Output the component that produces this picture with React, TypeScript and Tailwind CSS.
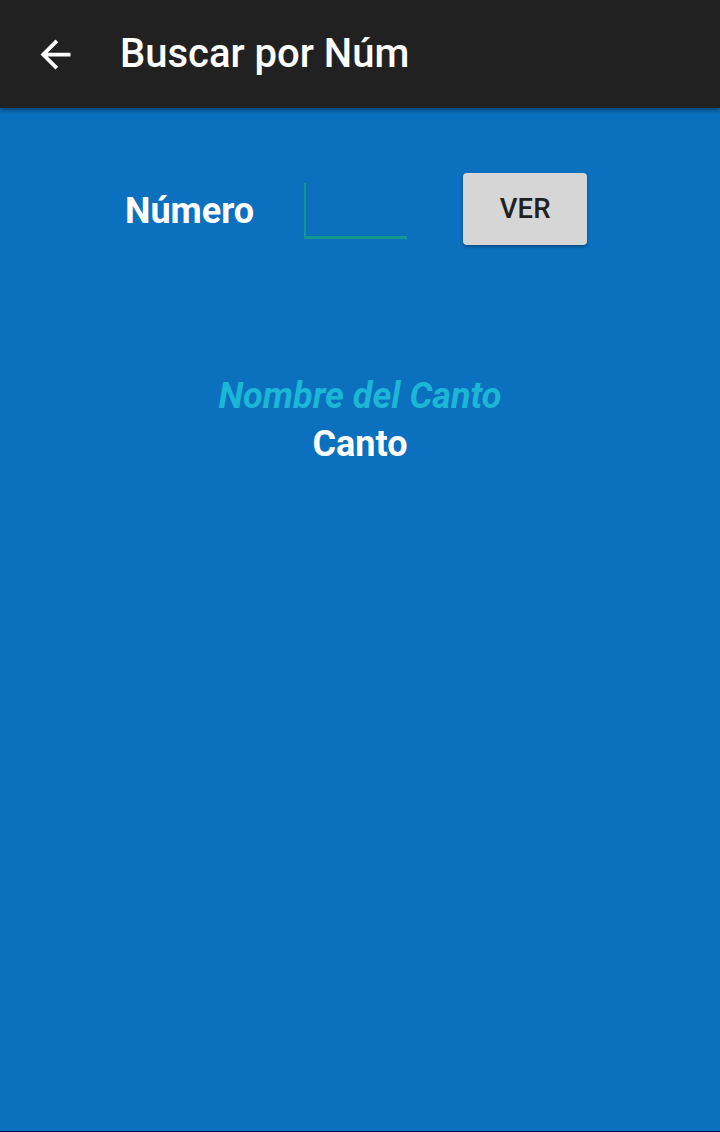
export default function App() {
  return (
    <div
      className="relative flex h-[1132px] w-[720px] flex-col overflow-hidden bg-[#0b71bf]"
      style={{ fontFamily: 'Roboto, "Noto Sans", sans-serif' }}
    >
      <header className="relative z-10 flex h-[108px] shrink-0 items-center bg-[#212121] shadow-[0_2px_5px_rgba(0,0,0,0.45)]">
        <svg viewBox="0 0 24 24" className="ml-[33px] h-[45px] w-[45px] fill-white">
          <path d="M20 11H7.83l5.59-5.59L12 4l-8 8 8 8 1.41-1.41L7.83 13H20v-2z" />
        </svg>
        <h1 className="ml-[42px] text-[40px] font-medium leading-none text-white">Buscar por Núm</h1>
      </header>

      <main className="flex flex-1 flex-col">
        <div className="mt-[65px] flex items-center">
          <span className="ml-[125px] mt-[4px] text-[36px] font-bold leading-none text-white">Número</span>
          <div className="ml-[50px] mt-[3px] h-[56px] w-[103px] border-b-[3px] border-l-2 border-[#14978d]" />
          <button className="ml-[56px] flex h-[72px] w-[124px] items-center justify-center rounded-[4px] bg-[#d6d6d6] text-[27.5px] font-medium text-[#212121] shadow-[0_2px_3px_rgba(0,0,0,0.3)]">
            VER
          </button>
        </div>

        <div className="mt-[127px] flex flex-col items-center">
          <p className="text-[36px] font-bold italic leading-[48px] text-[#1cb6d6]">Nombre del Canto</p>
          <p className="text-[36px] font-bold leading-[48px] text-white">Canto</p>
        </div>
      </main>

      <div className="h-[1px] shrink-0 bg-[#000a3a]" />
    </div>
  );
}
